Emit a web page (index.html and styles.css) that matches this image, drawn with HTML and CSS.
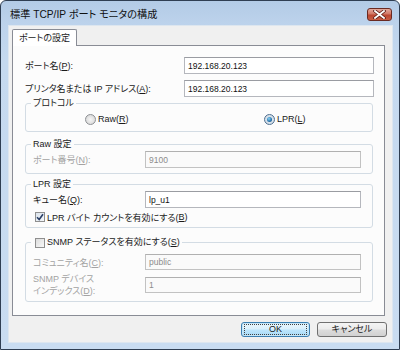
FILE: index.html
```html
<!DOCTYPE html>
<html lang="ja">
<head>
<meta charset="utf-8">
<title>標準 TCP/IP ポート モニタの構成</title>
<link rel="stylesheet" href="styles.css">
</head>
<body>
<div class="window">
  <div class="titlebar">
    <span class="title">標準 TCP/IP ポート モニタの構成</span>
    <span class="close"><svg width="13" height="9" viewBox="0 0 13 9"><path d="M2 1 L11 8 M11 1 L2 8" stroke="#5a1a12" stroke-width="3.4" stroke-linecap="square"/><path d="M2 1 L11 8 M11 1 L2 8" stroke="#ffffff" stroke-width="1.8" stroke-linecap="square"/></svg></span>
  </div>
  <div class="client">
    <div class="tabs"><div class="tab">ポートの設定</div></div>
    <div class="panel">
      <div class="row top r1"><span class="lbl lbl-top">ポート名(<u>P</u>):</span><span class="input">192.168.20.123</span></div>
      <div class="row top r2"><span class="lbl lbl-top">プリンタ名または IP アドレス(<u>A</u>):</span><span class="input">192.168.20.123</span></div>

      <fieldset class="group proto">
        <legend>プロトコル</legend>
        <div class="radios">
          <span class="radio-item raw"><span class="radio"></span>Raw(<u>R</u>)</span>
          <span class="radio-item lpr"><span class="radio on"></span>LPR(<u>L</u>)</span>
        </div>
      </fieldset>

      <fieldset class="group rawset">
        <legend>Raw 設定</legend>
        <div class="row"><span class="lbl lbl-grp dis">ポート番号(<u>N</u>):</span><span class="input disabled">9100</span></div>
      </fieldset>

      <fieldset class="group lprset">
        <legend>LPR 設定</legend>
        <div class="row"><span class="lbl lbl-grp">キュー名(<u>Q</u>):</span><span class="input">lp_u1</span></div>
        <div class="check-row"><span class="check on"><svg width="8" height="8" viewBox="0 0 8 8"><path d="M1 4.2 L3.2 6.5 L7 1.2" fill="none" stroke="#2a3f66" stroke-width="1.6"/></svg></span>LPR バイト カウントを有効にする(<u>B</u>)</div>
      </fieldset>

      <fieldset class="group snmpset">
        <legend><span class="check"></span>SNMP ステータスを有効にする(<u>S</u>)</legend>
        <div class="row s1"><span class="lbl lbl-grp dis">コミュニティ名(<u>C</u>):</span><span class="input disabled">public</span></div>
        <div class="row s2"><span class="lbl lbl-grp dis two">SNMP デバイス<br>インデックス(<u>D</u>):</span><span class="input disabled">1</span></div>
      </fieldset>
    </div>
    <div class="buttons">
      <span class="btn default"><span class="focus">OK</span></span>
      <span class="btn">キャンセル</span>
    </div>
  </div>
</div>
</body>
</html>
```

FILE: styles.css
```css
html, body {
  margin: 0;
  padding: 0;
}
body {
  width: 400px;
  height: 350px;
  overflow: hidden;
  background: #ffffff;
  font-family: "Liberation Sans", "Noto Sans CJK JP", sans-serif;
  font-size: 9px;
  color: #1a1a1a;
  font-feature-settings: "palt";
}
u { text-decoration: underline; text-underline-offset: 1px; }

.window {
  box-sizing: border-box;
  width: 400px;
  height: 350px;
  border: 1px solid #2f3e52;
  border-radius: 6px 6px 0 0;
  background: linear-gradient(180deg, #b3cbe6 0px, #bdd3ec 24px, #c5d9ef 60px, #c9dcf1 100%);
  padding: 0 6px 6px 7px;
  display: flex;
  flex-direction: column;
}

.titlebar {
  height: 24px;
  flex: none;
  display: flex;
  align-items: flex-start;
  justify-content: space-between;
}
.title {
  margin: 7px 0 0 2px;
  font-size: 10.2px;
  line-height: 13px;
  color: #101010;
}
.close {
  box-sizing: border-box;
  margin: 7px 1px 0 0;
  width: 25px;
  height: 13px;
  border: 1px solid #6a2a22;
  border-radius: 3px;
  background: linear-gradient(180deg, #e4a99d 0%, #d27865 45%, #bb4630 55%, #c85e44 100%);
  display: flex;
  align-items: center;
  justify-content: center;
}

.client {
  flex: 1;
  background: #f0f0f0;
  padding: 4px 6px 0 4px;
  display: flex;
  flex-direction: column;
  box-shadow: inset 0 0 0 1px #dde6ef;
}

.tabs {
  display: flex;
  height: 16px;
  flex: none;
}
.tab {
  position: relative;
  z-index: 1;
  box-sizing: border-box;
  width: 65px;
  height: 17px;
  border: 1px solid #898c95;
  border-bottom: none;
  border-radius: 2px 2px 0 0;
  background: #ffffff;
  text-align: center;
  line-height: 16px;
}

.panel {
  box-sizing: border-box;
  flex: none;
  height: 271px;
  margin-right: 2px;
  border: 1px solid #898c95;
  background: #fcfcfc;
  padding: 11px 10px 0 12px;
  display: flex;
  flex-direction: column;
}

.row {
  display: flex;
  align-items: center;
}
.r2 { margin-top: 6px; }
.lbl { flex: none; white-space: nowrap; }
.lbl-top { width: 159px; }
.lbl-grp { width: 112px; }
.two { white-space: normal; line-height: 12px; }
.dis { color: #a3a3a3; }

.input {
  box-sizing: border-box;
  flex: 1;
  height: 17px;
  border: 1px solid #b5b7bd;
  border-top-color: #9a9ca2;
  background: #ffffff;
  padding: 0 3px;
  display: flex;
  align-items: center;
  font-size: 8.5px;
  color: #111111;
}
.input.disabled {
  border-color: #c2c2c2;
  border-top-color: #b0b0b0;
  background: #fafafa;
  color: #8c8c8c;
}
.s1 .input, .s2 .input { height: 16px; }

.group {
  margin: 0 1px 0 0;
  padding: 0 11px 5px 5px;
  border: 1px solid #d3dce4;
  border-radius: 3px;
  min-width: 0;
}
.group legend {
  padding: 0 2px;
  line-height: 13px;
  display: flex;
  align-items: center;
}
.group .row, .group .check-row { margin-left: 2px; }

.proto { padding-bottom: 6px; }
.radios {
  display: flex;
  padding: 3px 0 0 54px;
  height: 12px;
  align-items: center;
}
.radio-item {
  display: flex;
  align-items: center;
}
.radio-item.raw { width: 179px; }
.radio {
  box-sizing: border-box;
  width: 11px;
  height: 11px;
  border-radius: 50%;
  border: 1px solid #8d9094;
  background: radial-gradient(circle at 50% 50%, #f6f6f6 0%, #dcdcdc 70%, #cfcfcf 100%);
  margin-right: 2px;
  display: flex;
  align-items: center;
  justify-content: center;
}
.radio.on {
  border-color: #4f6f8f;
  background: radial-gradient(circle, #e8eef4 0%, #c9d6e2 100%);
}
.radio.on::after {
  content: "";
  width: 5px;
  height: 5px;
  border-radius: 50%;
  background: radial-gradient(circle at 40% 35%, #8ad4f6 0%, #2a7ab4 55%, #123f6a 100%);
}

.rawset { margin-top: 6px; }
.lprset { margin-top: 4px; padding-bottom: 4px; }
.snmpset { margin-top: 8px; padding-bottom: 4px; }
.s1 { margin-top: 5px; }
.s2 { margin-top: 3px; }

.check-row {
  display: flex;
  align-items: center;
  height: 12px;
  margin-top: 3px;
}
.check {
  box-sizing: border-box;
  width: 10px;
  height: 10px;
  border: 1px solid #8f8f8f;
  background: linear-gradient(135deg, #dcdcdc 0%, #f8f8f8 100%);
  margin: 0 2px 0 2px;
  display: inline-flex;
  align-items: center;
  justify-content: center;
  flex: none;
}
.check.on { background: linear-gradient(135deg, #dbe3ec 0%, #f4f7fa 100%); }

.buttons {
  display: flex;
  justify-content: flex-end;
  gap: 7px;
  margin-top: 6px;
}
.btn {
  box-sizing: border-box;
  width: 70px;
  height: 15px;
  border: 1px solid #707070;
  border-radius: 3px;
  background: linear-gradient(180deg, #f4f4f4 0%, #ebebeb 48%, #dddddd 52%, #d1d1d1 100%);
  display: flex;
  align-items: center;
  justify-content: center;
  font-size: 9px;
  line-height: 11px;
}
.btn.default {
  width: 69px;
  border-color: #3c7fb1;
  background: linear-gradient(180deg, #eaf6fd 0%, #d9f0fc 48%, #bee6fd 52%, #a7d9f5 100%);
  box-shadow: inset 0 0 0 1px #c5e6f8;
}
.focus {
  box-sizing: border-box;
  width: 63px;
  height: 11px;
  border: 1px dotted #404040;
  display: flex;
  align-items: center;
  justify-content: center;
}
```
